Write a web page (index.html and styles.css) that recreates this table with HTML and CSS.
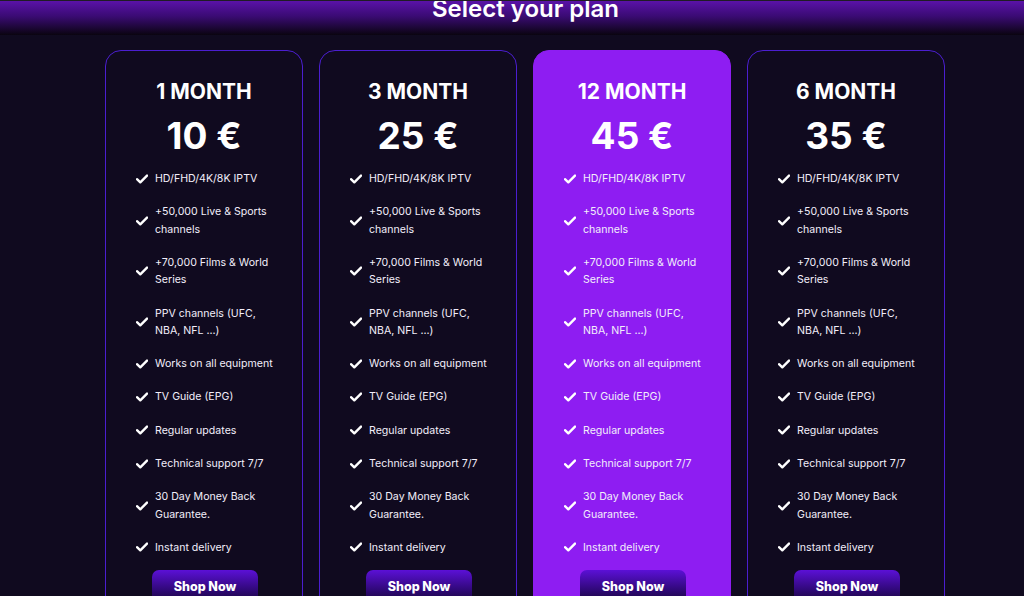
FILE: index.html
```html
<!DOCTYPE html>
<html lang="en">
<head>
<meta charset="utf-8">
<title>Select your plan</title>
<link rel="stylesheet" href="styles.css">
</head>
<body>
<header class="topbar"><h1 class="title">Select your plan</h1></header>
<main class="plans">
  <section class="card">
    <h2 class="card-title">1 MONTH</h2>
    <div class="price">10 €</div>
    <ul class="features">
      <li><svg class="check" viewBox="0 0 12 10"><path d="M1 5.2 4.3 8.3 11 1.6" /></svg><span>HD/FHD/4K/8K IPTV</span></li>
      <li><svg class="check" viewBox="0 0 12 10"><path d="M1 5.2 4.3 8.3 11 1.6" /></svg><span>+50,000 Live &amp; Sports channels</span></li>
      <li><svg class="check" viewBox="0 0 12 10"><path d="M1 5.2 4.3 8.3 11 1.6" /></svg><span>+70,000 Films &amp; World Series</span></li>
      <li><svg class="check" viewBox="0 0 12 10"><path d="M1 5.2 4.3 8.3 11 1.6" /></svg><span>PPV channels (UFC, NBA, NFL ...)</span></li>
      <li><svg class="check" viewBox="0 0 12 10"><path d="M1 5.2 4.3 8.3 11 1.6" /></svg><span>Works on all equipment</span></li>
      <li><svg class="check" viewBox="0 0 12 10"><path d="M1 5.2 4.3 8.3 11 1.6" /></svg><span>TV Guide (EPG)</span></li>
      <li><svg class="check" viewBox="0 0 12 10"><path d="M1 5.2 4.3 8.3 11 1.6" /></svg><span>Regular updates</span></li>
      <li><svg class="check" viewBox="0 0 12 10"><path d="M1 5.2 4.3 8.3 11 1.6" /></svg><span>Technical support 7/7</span></li>
      <li><svg class="check" viewBox="0 0 12 10"><path d="M1 5.2 4.3 8.3 11 1.6" /></svg><span>30 Day Money Back Guarantee.</span></li>
      <li><svg class="check" viewBox="0 0 12 10"><path d="M1 5.2 4.3 8.3 11 1.6" /></svg><span>Instant delivery</span></li>
    </ul>
    <a class="btn" href="#">Shop Now</a>
  </section>
  <section class="card">
    <h2 class="card-title">3 MONTH</h2>
    <div class="price">25 €</div>
    <ul class="features">
      <li><svg class="check" viewBox="0 0 12 10"><path d="M1 5.2 4.3 8.3 11 1.6" /></svg><span>HD/FHD/4K/8K IPTV</span></li>
      <li><svg class="check" viewBox="0 0 12 10"><path d="M1 5.2 4.3 8.3 11 1.6" /></svg><span>+50,000 Live &amp; Sports channels</span></li>
      <li><svg class="check" viewBox="0 0 12 10"><path d="M1 5.2 4.3 8.3 11 1.6" /></svg><span>+70,000 Films &amp; World Series</span></li>
      <li><svg class="check" viewBox="0 0 12 10"><path d="M1 5.2 4.3 8.3 11 1.6" /></svg><span>PPV channels (UFC, NBA, NFL ...)</span></li>
      <li><svg class="check" viewBox="0 0 12 10"><path d="M1 5.2 4.3 8.3 11 1.6" /></svg><span>Works on all equipment</span></li>
      <li><svg class="check" viewBox="0 0 12 10"><path d="M1 5.2 4.3 8.3 11 1.6" /></svg><span>TV Guide (EPG)</span></li>
      <li><svg class="check" viewBox="0 0 12 10"><path d="M1 5.2 4.3 8.3 11 1.6" /></svg><span>Regular updates</span></li>
      <li><svg class="check" viewBox="0 0 12 10"><path d="M1 5.2 4.3 8.3 11 1.6" /></svg><span>Technical support 7/7</span></li>
      <li><svg class="check" viewBox="0 0 12 10"><path d="M1 5.2 4.3 8.3 11 1.6" /></svg><span>30 Day Money Back Guarantee.</span></li>
      <li><svg class="check" viewBox="0 0 12 10"><path d="M1 5.2 4.3 8.3 11 1.6" /></svg><span>Instant delivery</span></li>
    </ul>
    <a class="btn" href="#">Shop Now</a>
  </section>
  <section class="card card-featured">
    <h2 class="card-title">12 MONTH</h2>
    <div class="price">45 €</div>
    <ul class="features">
      <li><svg class="check" viewBox="0 0 12 10"><path d="M1 5.2 4.3 8.3 11 1.6" /></svg><span>HD/FHD/4K/8K IPTV</span></li>
      <li><svg class="check" viewBox="0 0 12 10"><path d="M1 5.2 4.3 8.3 11 1.6" /></svg><span>+50,000 Live &amp; Sports channels</span></li>
      <li><svg class="check" viewBox="0 0 12 10"><path d="M1 5.2 4.3 8.3 11 1.6" /></svg><span>+70,000 Films &amp; World Series</span></li>
      <li><svg class="check" viewBox="0 0 12 10"><path d="M1 5.2 4.3 8.3 11 1.6" /></svg><span>PPV channels (UFC, NBA, NFL ...)</span></li>
      <li><svg class="check" viewBox="0 0 12 10"><path d="M1 5.2 4.3 8.3 11 1.6" /></svg><span>Works on all equipment</span></li>
      <li><svg class="check" viewBox="0 0 12 10"><path d="M1 5.2 4.3 8.3 11 1.6" /></svg><span>TV Guide (EPG)</span></li>
      <li><svg class="check" viewBox="0 0 12 10"><path d="M1 5.2 4.3 8.3 11 1.6" /></svg><span>Regular updates</span></li>
      <li><svg class="check" viewBox="0 0 12 10"><path d="M1 5.2 4.3 8.3 11 1.6" /></svg><span>Technical support 7/7</span></li>
      <li><svg class="check" viewBox="0 0 12 10"><path d="M1 5.2 4.3 8.3 11 1.6" /></svg><span>30 Day Money Back Guarantee.</span></li>
      <li><svg class="check" viewBox="0 0 12 10"><path d="M1 5.2 4.3 8.3 11 1.6" /></svg><span>Instant delivery</span></li>
    </ul>
    <a class="btn" href="#">Shop Now</a>
  </section>
  <section class="card">
    <h2 class="card-title">6 MONTH</h2>
    <div class="price">35 €</div>
    <ul class="features">
      <li><svg class="check" viewBox="0 0 12 10"><path d="M1 5.2 4.3 8.3 11 1.6" /></svg><span>HD/FHD/4K/8K IPTV</span></li>
      <li><svg class="check" viewBox="0 0 12 10"><path d="M1 5.2 4.3 8.3 11 1.6" /></svg><span>+50,000 Live &amp; Sports channels</span></li>
      <li><svg class="check" viewBox="0 0 12 10"><path d="M1 5.2 4.3 8.3 11 1.6" /></svg><span>+70,000 Films &amp; World Series</span></li>
      <li><svg class="check" viewBox="0 0 12 10"><path d="M1 5.2 4.3 8.3 11 1.6" /></svg><span>PPV channels (UFC, NBA, NFL ...)</span></li>
      <li><svg class="check" viewBox="0 0 12 10"><path d="M1 5.2 4.3 8.3 11 1.6" /></svg><span>Works on all equipment</span></li>
      <li><svg class="check" viewBox="0 0 12 10"><path d="M1 5.2 4.3 8.3 11 1.6" /></svg><span>TV Guide (EPG)</span></li>
      <li><svg class="check" viewBox="0 0 12 10"><path d="M1 5.2 4.3 8.3 11 1.6" /></svg><span>Regular updates</span></li>
      <li><svg class="check" viewBox="0 0 12 10"><path d="M1 5.2 4.3 8.3 11 1.6" /></svg><span>Technical support 7/7</span></li>
      <li><svg class="check" viewBox="0 0 12 10"><path d="M1 5.2 4.3 8.3 11 1.6" /></svg><span>30 Day Money Back Guarantee.</span></li>
      <li><svg class="check" viewBox="0 0 12 10"><path d="M1 5.2 4.3 8.3 11 1.6" /></svg><span>Instant delivery</span></li>
    </ul>
    <a class="btn" href="#">Shop Now</a>
  </section>
</main>
</body>
</html>
```
FILE: styles.css
```css
* { box-sizing: border-box; }
html, body { margin: 0; padding: 0; }
body {
  background: #100a1f;
  color: #fff;
  font-family: Inter, "Noto Sans", sans-serif;
  overflow: hidden;
  height: 596px;
}
.topbar {
  height: 35px;
  border-top: 1px solid #1f1c24;
  background: linear-gradient(to bottom, #5a12a8 0%, #3a0b73 45%, #0a0410 100%);
  display: flex;
  justify-content: center;
  align-items: flex-end;
  overflow: hidden;
  padding-left: 27px;
}
.title {
  margin: 0 0 14px 0;
  font-size: 24px;
  font-weight: 600;
  line-height: 24px;
  color: #fff;
}
.plans {
  display: flex;
  justify-content: center;
  gap: 16px;
  padding: 15px 0 0 26px;
}
.card {
  width: 198px;
  flex: 0 0 198px;
  height: 600px;
  border: 1px solid #4b1ed0;
  border-radius: 16px;
  padding: 28px 26px 0 30px;
  display: flex;
  flex-direction: column;
}
.card-featured {
  background: #8e1df2;
  border-color: #8e1df2;
}
.card-title {
  margin: 0;
  padding-right: 4px;
  text-align: center;
  font-size: 21px;
  font-weight: 700;
  line-height: 26px;
}
.price {
  padding-right: 4px;
  text-align: center;
  font-size: 37px;
  font-weight: 700;
  line-height: 44px;
  margin-top: 9px;
}
.features {
  list-style: none;
  margin: 12px 0 0 0;
  padding: 0;
  display: flex;
  flex-direction: column;
  gap: 15.7px;
}
.features li {
  display: flex;
  align-items: center;
  gap: 7px;
  font-size: 10.6px;
  line-height: 17.5px;
  color: #f2eefa;
}
.check {
  width: 12px;
  height: 10px;
  flex: 0 0 12px;
  fill: none;
  stroke: #fff;
  stroke-width: 2.4;
  stroke-linecap: round;
  stroke-linejoin: round;
}
.btn {
  align-self: flex-start;
  margin: 14px 0 0 16px;
  width: 106px;
  height: 36px;
  border-radius: 7px;
  background: linear-gradient(to bottom, #5b10d6 0%, #2c0870 60%, #14052e 100%);
  color: #fff;
  text-decoration: none;
  font-size: 12.5px;
  font-weight: 800;
  display: flex;
  justify-content: center;
  padding-top: 9px;
}
```
